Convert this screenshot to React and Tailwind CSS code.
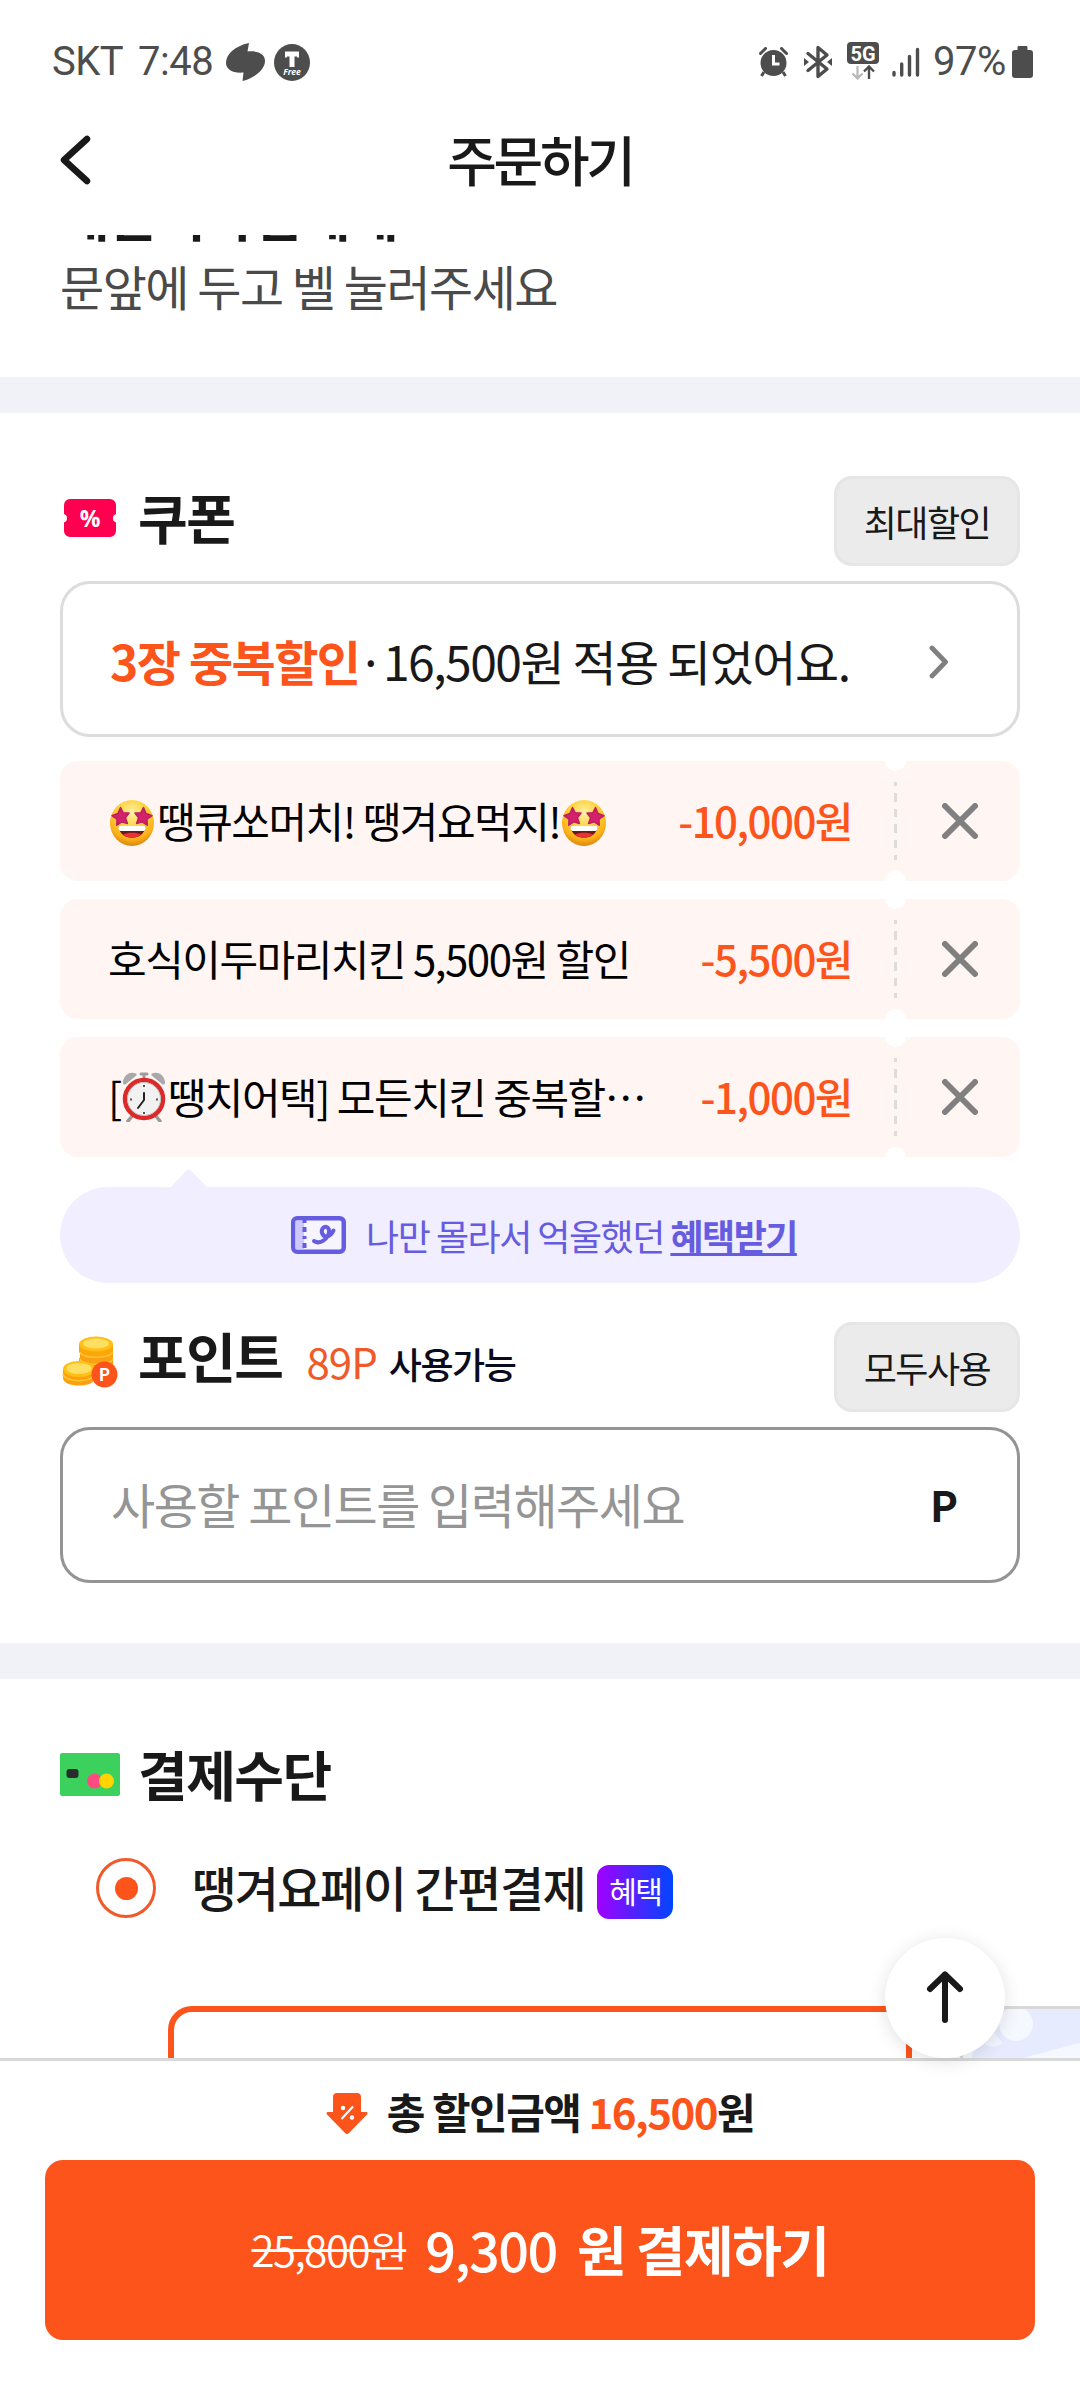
import { useState } from "react";

const FONT = "font-['Noto_Sans_CJK_KR','Noto_Sans',sans-serif]";

const COUPONS = [
    { id: 1, before: "", icon: "star", name: "땡큐쏘머치! 땡겨요먹지!", after: "star", price: "-10,000원" },
    { id: 2, before: "", icon: null, name: "호식이두마리치킨 5,500원 할인", after: null, price: "-5,500원" },
    { id: 3, before: "[", icon: "clock", name: "땡치어택] 모든치킨 중복할…", after: null, price: "-1,000원" },
];

function StarFace() {
    return (
        <svg width="46" height="48" viewBox="0 0 46 48" className="mt-[7px] mr-[2px] ml-[1px] shrink-0">
            <defs>
                <radialGradient id="face" cx="50%" cy="28%" r="72%">
                    <stop offset="0" stopColor="#fff0a8" />
                    <stop offset="0.45" stopColor="#fdd23c" />
                    <stop offset="0.8" stopColor="#fbb016" />
                    <stop offset="1" stopColor="#d98412" />
                </radialGradient>
            </defs>
            <ellipse cx="23" cy="24" rx="22" ry="23" fill="url(#face)" />
            <path d="M11 27h24c1 0 1.500.6 1.300 1.600C35.300 35 30 38.800 23 38.800S10.700 35 9.700 28.600C9.500 27.600 10 27 11 27z" fill="#6d1a16" />
            <path d="M10 27h26c.8 0 .8 5-1.500 5h-23C9.200 32 9.200 27 10 27z" fill="#fff" />
            <path d="M14 35.500c5-2.400 13-2.400 18 0-2.600 2.300-5.600 3.300-9 3.300s-6.400-1-9-3.300z" fill="#e8323a" />
            <g fill="#d3226c" stroke="#c01c62" strokeWidth="1.500" strokeLinejoin="round">
                <path d="M11.500 8.500l2.700 5.300 5.800.2-3.600 4.800 2 5.700-5.700-1.700-4.900 3.400.2-6L3 16.600l5.900-2.100z" />
                <path d="M34.500 8.500l-2.700 5.300-5.800.2 3.600 4.800-2 5.700 5.700-1.700 4.900 3.400-.2-6 5-3.600-5.900-2.100z" />
            </g>
        </svg>
    );
}

function ClockFace() {
    return (
        <svg width="44" height="50" viewBox="0 0 44 50" className="mt-[3px] mr-[2px] ml-[1px] shrink-0">
            <path d="M11 43l-5 6M33 43l5 6" stroke="#9a9a9a" strokeWidth="3.500" strokeLinecap="round" />
            <path d="M19 2h6M22 2v6" stroke="#9d9d9d" strokeWidth="3" strokeLinecap="round" />
            <path d="M1 11C1 4 7-1 14 1.500c1 .5 1 1.500 0 2.200L4 12c-1.500 1-3 .5-3-1z" fill="#a9a9a9" />
            <path d="M43 11C43 4 37-1 30 1.500c-1 .5-1 1.500 0 2.200L40 12c1.500 1 3 .5 3-1z" fill="#a9a9a9" />
            <circle cx="22" cy="27" r="19" fill="#f1f1f1" stroke="#dc2a2a" strokeWidth="4.500" />
            <circle cx="22" cy="27" r="16.500" fill="none" stroke="#c4c4c4" strokeWidth="1" />
            <path d="M22 13v2M22 40v2M8 27.500h2M34 27.500h2" stroke="#555" strokeWidth="2" />
            <path d="M22 21v7l-6 8" fill="none" stroke="#222" strokeWidth="2" strokeLinecap="round" />
        </svg>
    );
}

function Emoji({ kind }) {
    if (kind === "star") return <StarFace />;
    if (kind === "clock") return <ClockFace />;
    return null;
}

function StatusBar() {
    return (
        <div className="flex h-[124px] shrink-0 items-center justify-between pl-[52px] pr-[47px] font-[Roboto,sans-serif] text-[40px] leading-none text-[#4d4d4d]">
            <div className="flex items-center">
                <span className="w-[86px] tracking-[-0.5px]">SKT</span>
                <span className="w-[88px] tracking-[-0.5px]">7:48</span>
                <svg width="39" height="38" viewBox="0 0 39 38" fill="#4d4d4d">
                    <path d="M23 0l-1.500 8.500C32 7.500 39 11 39 18c0 8-9 16.500-22.500 20l1-8.500C7 30.500 0 26.500 0 20 0 11 9 3 23 0z" />
                </svg>
                <svg width="36" height="37" viewBox="0 0 36 37" className="ml-[9px]">
                    <ellipse cx="18" cy="18.500" rx="18" ry="18.500" fill="#4d4d4d" />
                    <path d="M11 7.500h14v6h-2v-1h-2.500V23h-5V12.500H13v1h-2z" fill="#fff" />
                    <text x="18" y="31" textAnchor="middle" fontSize="8.500" fontStyle="italic" fontWeight="700" fontFamily="Open Sans" fill="#fff">Free</text>
                </svg>
            </div>
            <div className="flex items-center">
                <svg width="29" height="30" viewBox="0 0 29 30" className="mr-[1px]">
                    <circle cx="14.500" cy="16" r="13" fill="#4d4d4d" />
                    <path d="M6.500 1.500l-5 5M22.500 1.500l5 5" stroke="#4d4d4d" strokeWidth="3" strokeLinecap="round" />
                    <path d="M5 25l-2.500 4M24 25l2.500 4" stroke="#4d4d4d" strokeWidth="3" />
                    <path d="M14.500 8v9h6" fill="none" stroke="#fff" strokeWidth="3" />
                </svg>
                <svg width="28" height="34" viewBox="0 0 28 34" className="ml-[15px]">
                    <path d="M4 8.500l19 15.500-9 7.500V2.500l9 7.500L4 25.500" fill="none" stroke="#4d4d4d" strokeWidth="3.400" strokeLinecap="round" strokeLinejoin="round" />
                    <path d="M0 13l5 4-5 4zM28 13l-5 4 5 4z" fill="#4d4d4d" />
                </svg>
                <svg width="32" height="38" viewBox="0 0 32 38" className="mt-[-3px] ml-[15px]">
                    <rect width="32" height="22" rx="4" fill="#4d4d4d" />
                    <text x="16" y="18.500" textAnchor="middle" fontSize="20" fontWeight="700" fontFamily="Roboto" fill="#fff">5G</text>
                    <path d="M10.500 24v12M5.500 31.500l5 5 5-5" fill="none" stroke="#b8b8b8" strokeWidth="2.200" />
                    <path d="M22 37V25M17 29.500l5-5 5 5" fill="none" stroke="#4d4d4d" strokeWidth="2.400" />
                </svg>
                <svg width="28" height="30" viewBox="0 0 28 30" className="ml-[13px]" stroke="#4d4d4d" strokeWidth="3.400" strokeLinecap="round">
                    <path d="M2 25.500v2.500M9.700 17v11M17.500 9.500V28M25.500 2.500V28" />
                </svg>
                <span className="ml-[13px] w-[79px] tracking-[-0.5px]">97%</span>
                <svg width="21" height="32" viewBox="0 0 21 32" fill="#4d4d4d">
                    <path d="M7 0h7c1 0 1.500.7 1.500 1.500V4H18c2 0 3 1 3 3v22c0 2-1 3-3 3H3c-2 0-3-1-3-3V7c0-2 1-3 3-3h2.500V1.500C5.500.7 6 0 7 0z" />
                </svg>
            </div>
        </div>
    );
}

function Header() {
    return (
        <header className="flex h-[111px] shrink-0 pl-[60px] pr-[60px]">
            <svg width="31" height="50" viewBox="0 0 31 50" className="mt-[11px]">
                <path d="M27 4L4 25l23 21" fill="none" stroke="#191919" strokeWidth="6.500" strokeLinecap="round" strokeLinejoin="round" />
            </svg>
            <h1 className="mr-[31px] flex-1 text-center text-[54px] leading-[70px] font-medium tracking-[-3.300px] text-[#191919]">주문하기</h1>
        </header>
    );
}

function CouponRow({ coupon, onRemove }) {
    return (
        <li className="relative flex h-[120px] overflow-hidden rounded-[18px] bg-[#fff5f3]">
            <div className="flex w-[834px] items-center justify-between pr-[42px] pb-[3px] pl-[48px] text-[42px] leading-[60px] tracking-[-1.500px]">
                <div className="flex items-center whitespace-pre text-black">
                    {coupon.before}
                    <Emoji kind={coupon.icon} />
                    <span>{coupon.name}</span>
                    <Emoji kind={coupon.after} />
                </div>
                <span className="font-medium text-[#fc541b]">{coupon.price}</span>
            </div>
            <div className="mt-[21px] h-[78px] w-[3px] bg-[repeating-linear-gradient(to_bottom,#dcdcdc_0_4px,transparent_4px_11px,#dcdcdc_11px_15.600px)]" />
            <button className="flex flex-1 items-center justify-center" onClick={() => onRemove(coupon.id)}>
                <svg width="36" height="36" viewBox="0 0 36 36" className="mr-[-3px]">
                    <path d="M3 3l30 30M33 3L3 33" stroke="#808080" strokeWidth="6" strokeLinecap="round" />
                </svg>
            </button>
            {/* punched notches on the tear line */}
            <span className="absolute top-[-11px] left-[825px] size-[21px] rounded-full bg-white" />
            <span className="absolute bottom-[-11px] left-[825px] size-[21px] rounded-full bg-white" />
        </li>
    );
}

function GrayButton({ children }) {
    return (
        <button className="h-[90px] w-[186px] rounded-[18px] border-[3px] border-[#e6e6e6] bg-[#ebebeb] text-[36px] leading-[54px] tracking-[-1.500px] text-[#191919]">
            {children}
        </button>
    );
}

function CouponSection() {
    const [coupons, setCoupons] = useState(COUPONS);

    const handleRemove = (id) => {
        setCoupons(coupons.filter((c) => c.id !== id));
    };

    return (
        <section className="px-[60px] pt-[63px]">
            <div className="flex h-[90px] justify-between">
                <div className="flex">
                    <svg width="52" height="38" viewBox="0 0 52 38" className="mt-[23px] ml-[4px]">
                        <path d="M6 0h40a6 6 0 0 1 6 6v9a4.500 4.500 0 0 0 0 8.500V32a6 6 0 0 1-6 6H6a6 6 0 0 1-6-6v-8.500A4.500 4.500 0 0 0 0 15V6a6 6 0 0 1 6-6z" fill="#ff0050" />
                        <text x="26" y="28" textAnchor="middle" fontSize="23" fontWeight="700" fontFamily="Open Sans" fill="#fff">%</text>
                    </svg>
                    <h2 className="ml-[22px] text-[54px] leading-[82px] font-bold tracking-[-1.500px] text-[#191919]">쿠폰</h2>
                </div>
                <GrayButton>최대할인</GrayButton>
            </div>

            <div className="mt-[15px] flex h-[156px] items-center rounded-[30px] border-[3px] border-[#dcdcdc] pt-[1px] pr-[66px] pl-[47px] text-[48px] leading-[72px] tracking-[-1.500px] text-[#191919]">
                <b className="text-[#fc541b]">3장 중복할인</b>
                <span className="ml-[-2px]">·</span>
                <span className="whitespace-pre">16,500원 적용 되었어요.</span>
                <svg width="20" height="34" viewBox="0 0 20 34" className="mt-[5px] mr-[2px] ml-auto">
                    <path d="M3 3l13.500 14L3 31" fill="none" stroke="#808080" strokeWidth="4.800" strokeLinecap="round" strokeLinejoin="round" />
                </svg>
            </div>

            <ul className="mt-[24px] flex flex-col gap-[18px]">
                {coupons.map((coupon) => (
                    <CouponRow key={coupon.id} coupon={coupon} onRemove={handleRemove} />
                ))}
            </ul>

            <svg width="36" height="18" viewBox="0 0 36 18" className="mt-[12px] ml-[111px] block">
                <path d="M0 18L15.500 1.500q2-2 4 0L36 18z" fill="#f0eeff" />
            </svg>
            <div className="flex h-[96px] items-center justify-center rounded-full bg-[#f0eeff] pb-[1px] pl-[8px] text-[36px] leading-[54px] tracking-[-1.500px] text-[#665ce0]">
                <svg width="55" height="38" viewBox="0 0 55 38" className="mr-[20px]">
                    <rect x="2.250" y="2.250" width="50.500" height="33.500" rx="4" fill="#f6f5ff" stroke="#665ce0" strokeWidth="4.500" />
                    <path d="M4.500 4.500H13v29H4.500z" fill="#cdc9fa" />
                    <path d="M13.500 4v30" stroke="#665ce0" strokeWidth="4" strokeDasharray="3 4 5 4" />
                    <path d="M23 25c6 4 14-2 15-9 .5-4-3-7-6-4-3 3.500 0 9 4 8.500 3-.5 5-3 6.500-6" fill="none" stroke="#665ce0" strokeWidth="4" strokeLinecap="round" />
                </svg>
                <span className="whitespace-pre">나만 몰라서 억울했던 </span>
                <b className="underline decoration-[3px] underline-offset-[2px]">혜택받기</b>
            </div>
        </section>
    );
}

function CoinIcon() {
    return (
        <svg width="56" height="52" viewBox="0 0 56 52" className="mt-[14px] ml-[2px]">
            <path d="M17 22v9c0 8 34 8 34 0v-9z" fill="#f99a0c" />
            <path d="M18 14v9c0 8 33 8 33 0v-9z" fill="#fba010" />
            <path d="M17 8v7c0 9 34 9 34 0V8z" fill="#fca60c" />
            <path d="M18 16c2 7 30 7 33 0M18 23c2 7 30 7 33 0" fill="none" stroke="#ffc531" strokeWidth="1.500" />
            <ellipse cx="34" cy="8" rx="17" ry="7.500" fill="#ffbf14" />
            <ellipse cx="34" cy="7.500" rx="13" ry="5" fill="#ffdf62" />
            <path d="M1 33v9c0 10 32 10 32 0v-9z" fill="#fba00e" />
            <path d="M1 38c2 9 30 9 32 0" fill="none" stroke="#ffc531" strokeWidth="1.500" />
            <ellipse cx="17" cy="33" rx="16" ry="8" fill="#ffbf14" />
            <ellipse cx="17" cy="32.500" rx="12.500" ry="5.500" fill="#ffdf62" />
            <circle cx="42.500" cy="38.500" r="13" fill="#fc541b" />
            <text x="42.500" y="44.500" textAnchor="middle" fontSize="17" fontWeight="700" fontFamily="Noto Sans CJK KR" fill="#fff">P</text>
        </svg>
    );
}

function PointSection() {
    return (
        <section className="px-[60px] pt-[39px] pb-[60px]">
            <div className="flex h-[90px] justify-between">
                <div className="flex">
                    <CoinIcon />
                    <h2 className="ml-[20px] text-[54px] leading-[68px] font-bold tracking-[-1.500px] text-[#191919]">포인트</h2>
                    <span className="ml-[24px] text-[42px] leading-[78px] tracking-[-1px] text-[#f0592a]">89P</span>
                    <span className="ml-[12px] text-[36px] leading-[83px] font-medium tracking-[-1.500px] text-[#0b0b1e]">사용가능</span>
                </div>
                <GrayButton>모두사용</GrayButton>
            </div>
            <div className="mt-[15px] flex h-[156px] items-center justify-between rounded-[30px] border-[3px] border-[#949494] pr-[59px] pb-[4px] pl-[48px]">
                <span className="text-[48px] leading-[72px] tracking-[-1.500px] text-[#959595]">사용할 포인트를 입력해주세요</span>
                <b className="mt-[2px] text-[42px] leading-[60px] text-[#191919]">P</b>
            </div>
        </section>
    );
}

function PaymentSection() {
    return (
        <section className="pt-[59px]">
            <div className="flex h-[72px] items-center px-[60px]">
                <svg width="60" height="43" viewBox="0 0 60 43">
                    <rect width="60" height="43" rx="2" fill="#3bd15c" />
                    <rect x="6.500" y="16" width="12" height="9" rx="3" fill="#2b2b2b" />
                    <circle cx="34.500" cy="28" r="7.500" fill="#ff4b82" />
                    <circle cx="46.500" cy="28" r="7.500" fill="#ffd400" />
                </svg>
                <h2 className="ml-[18px] text-[54px] leading-[72px] font-bold tracking-[-1.500px] text-[#191919]">결제수단</h2>
            </div>
            <div className="mt-[48px] flex h-[60px] items-center pl-[96px]">
                <span className="flex size-[60px] items-center justify-center rounded-full border-[3px] border-[#f0592a]">
                    <span className="size-[23px] rounded-full bg-[#fc541b]" />
                </span>
                <span className="mb-[4px] ml-[36px] text-[48px] leading-[60px] font-medium tracking-[-1.500px] text-[#191919]">땡겨요페이 간편결제</span>
                <span className="mt-[8px] ml-[12px] h-[54px] w-[76px] rounded-[12px] bg-linear-to-r/srgb from-[#a200ff] to-[#0046ff] text-center text-[30px] leading-[51px] tracking-[-1.500px] text-white">혜택</span>
            </div>
            <div className="mt-[88px] flex gap-[48px] pl-[168px]">
                <div className="h-[300px] w-[744px] shrink-0 rounded-[24px] border-[6px] border-[#fc541b] bg-white" />
                <div className="h-[300px] w-[744px] shrink-0 overflow-hidden rounded-[24px] border-[3px] border-[#d9d9d9]">
                    <svg width="160" height="60" viewBox="0 0 160 60">
                        <path d="M0 0h160v60H0z" fill="#e6ebfe" />
                        <path d="M0 0h20L6 60H0z" fill="#f8f9ff" />
                        <circle cx="53" cy="15" r="17" fill="#f5f8ff" />
                        <path d="M20 22h10l10 12q-8 6-18 2z" fill="#f3f6ff" />
                        <path d="M60 49l60-16v27H60z" fill="#f5f8ff" />
                    </svg>
                </div>
            </div>
        </section>
    );
}

function Footer() {
    return (
        <footer className="relative h-[342px] shrink-0 border-t-[3px] border-[#d9d9d9] bg-white px-[45px]">
            <div className="flex h-[99px] items-center justify-center text-[42px] leading-[60px] font-bold tracking-[-1.500px] text-[#191919]">
                <svg width="42" height="41" viewBox="0 0 42 41" className="mt-[5px] mr-[19px]">
                    <path d="M11 0h20c2.500 0 4 1.500 4 4v15h5c1.500 0 2 1.500 1 2.500L23 40c-1.200 1.200-2.800 1.200-4 0L1 21.500C0 20.500.5 19 2 19h5V4c0-2.500 1.500-4 4-4z" fill="#fc541b" />
                    <path d="M15.500 26L27 13.500" stroke="#fff" strokeWidth="2" />
                    <circle cx="17" cy="15" r="2.200" fill="#fff" />
                    <circle cx="26" cy="24.500" r="2.200" fill="#fff" />
                </svg>
                <span className="whitespace-pre">총 할인금액 </span>
                <span className="text-[#fc541b]">16,500</span>
                <span>원</span>
            </div>
            <button className="flex h-[180px] w-full items-center justify-center rounded-[18px] bg-[#fc541b] pb-[3px] text-[54px] leading-[80px] tracking-[-1.500px] text-white">
                <span className="text-[42px] font-[350] line-through decoration-[3px]">25,800원</span>
                <span className="ml-[19px] font-medium">9,300</span>
                <span className="ml-[20px] font-bold">원 결제하기</span>
            </button>
            <button className="absolute top-[-123px] right-[75px] flex size-[120px] items-center justify-center rounded-full bg-white pb-[2px] shadow-[0_3px_18px_rgba(0,0,0,0.12)]">
                <svg width="38" height="52" viewBox="0 0 38 52">
                    <path d="M19 49V3.500M4 18L19 3.500 34 18" fill="none" stroke="#191919" strokeWidth="6" strokeLinecap="round" strokeLinejoin="round" />
                </svg>
            </button>
        </footer>
    );
}

function App() {
    return (
        <div className={`flex h-[2400px] w-[1080px] flex-col overflow-hidden bg-white ${FONT}`}>
            <StatusBar />
            <Header />
            <main className="h-[1823px] shrink-0 overflow-hidden">
                <div className="mt-[-60px] h-[202px] px-[60px]">
                    <p className="text-[54px] leading-[78px] font-bold tracking-[-1.500px] text-[#191919]">배달기사님에게</p>
                    <p className="text-[48px] leading-[64px] tracking-[-1.500px] text-[#4a4a4a]">문앞에 두고 벨 눌러주세요</p>
                </div>
                <div className="h-[36px] bg-[#f1f2f8]" />
                <CouponSection />
                <PointSection />
                <div className="h-[36px] bg-[#f1f2f8]" />
                <PaymentSection />
            </main>
            <Footer />
        </div>
    );
}

export default App;
